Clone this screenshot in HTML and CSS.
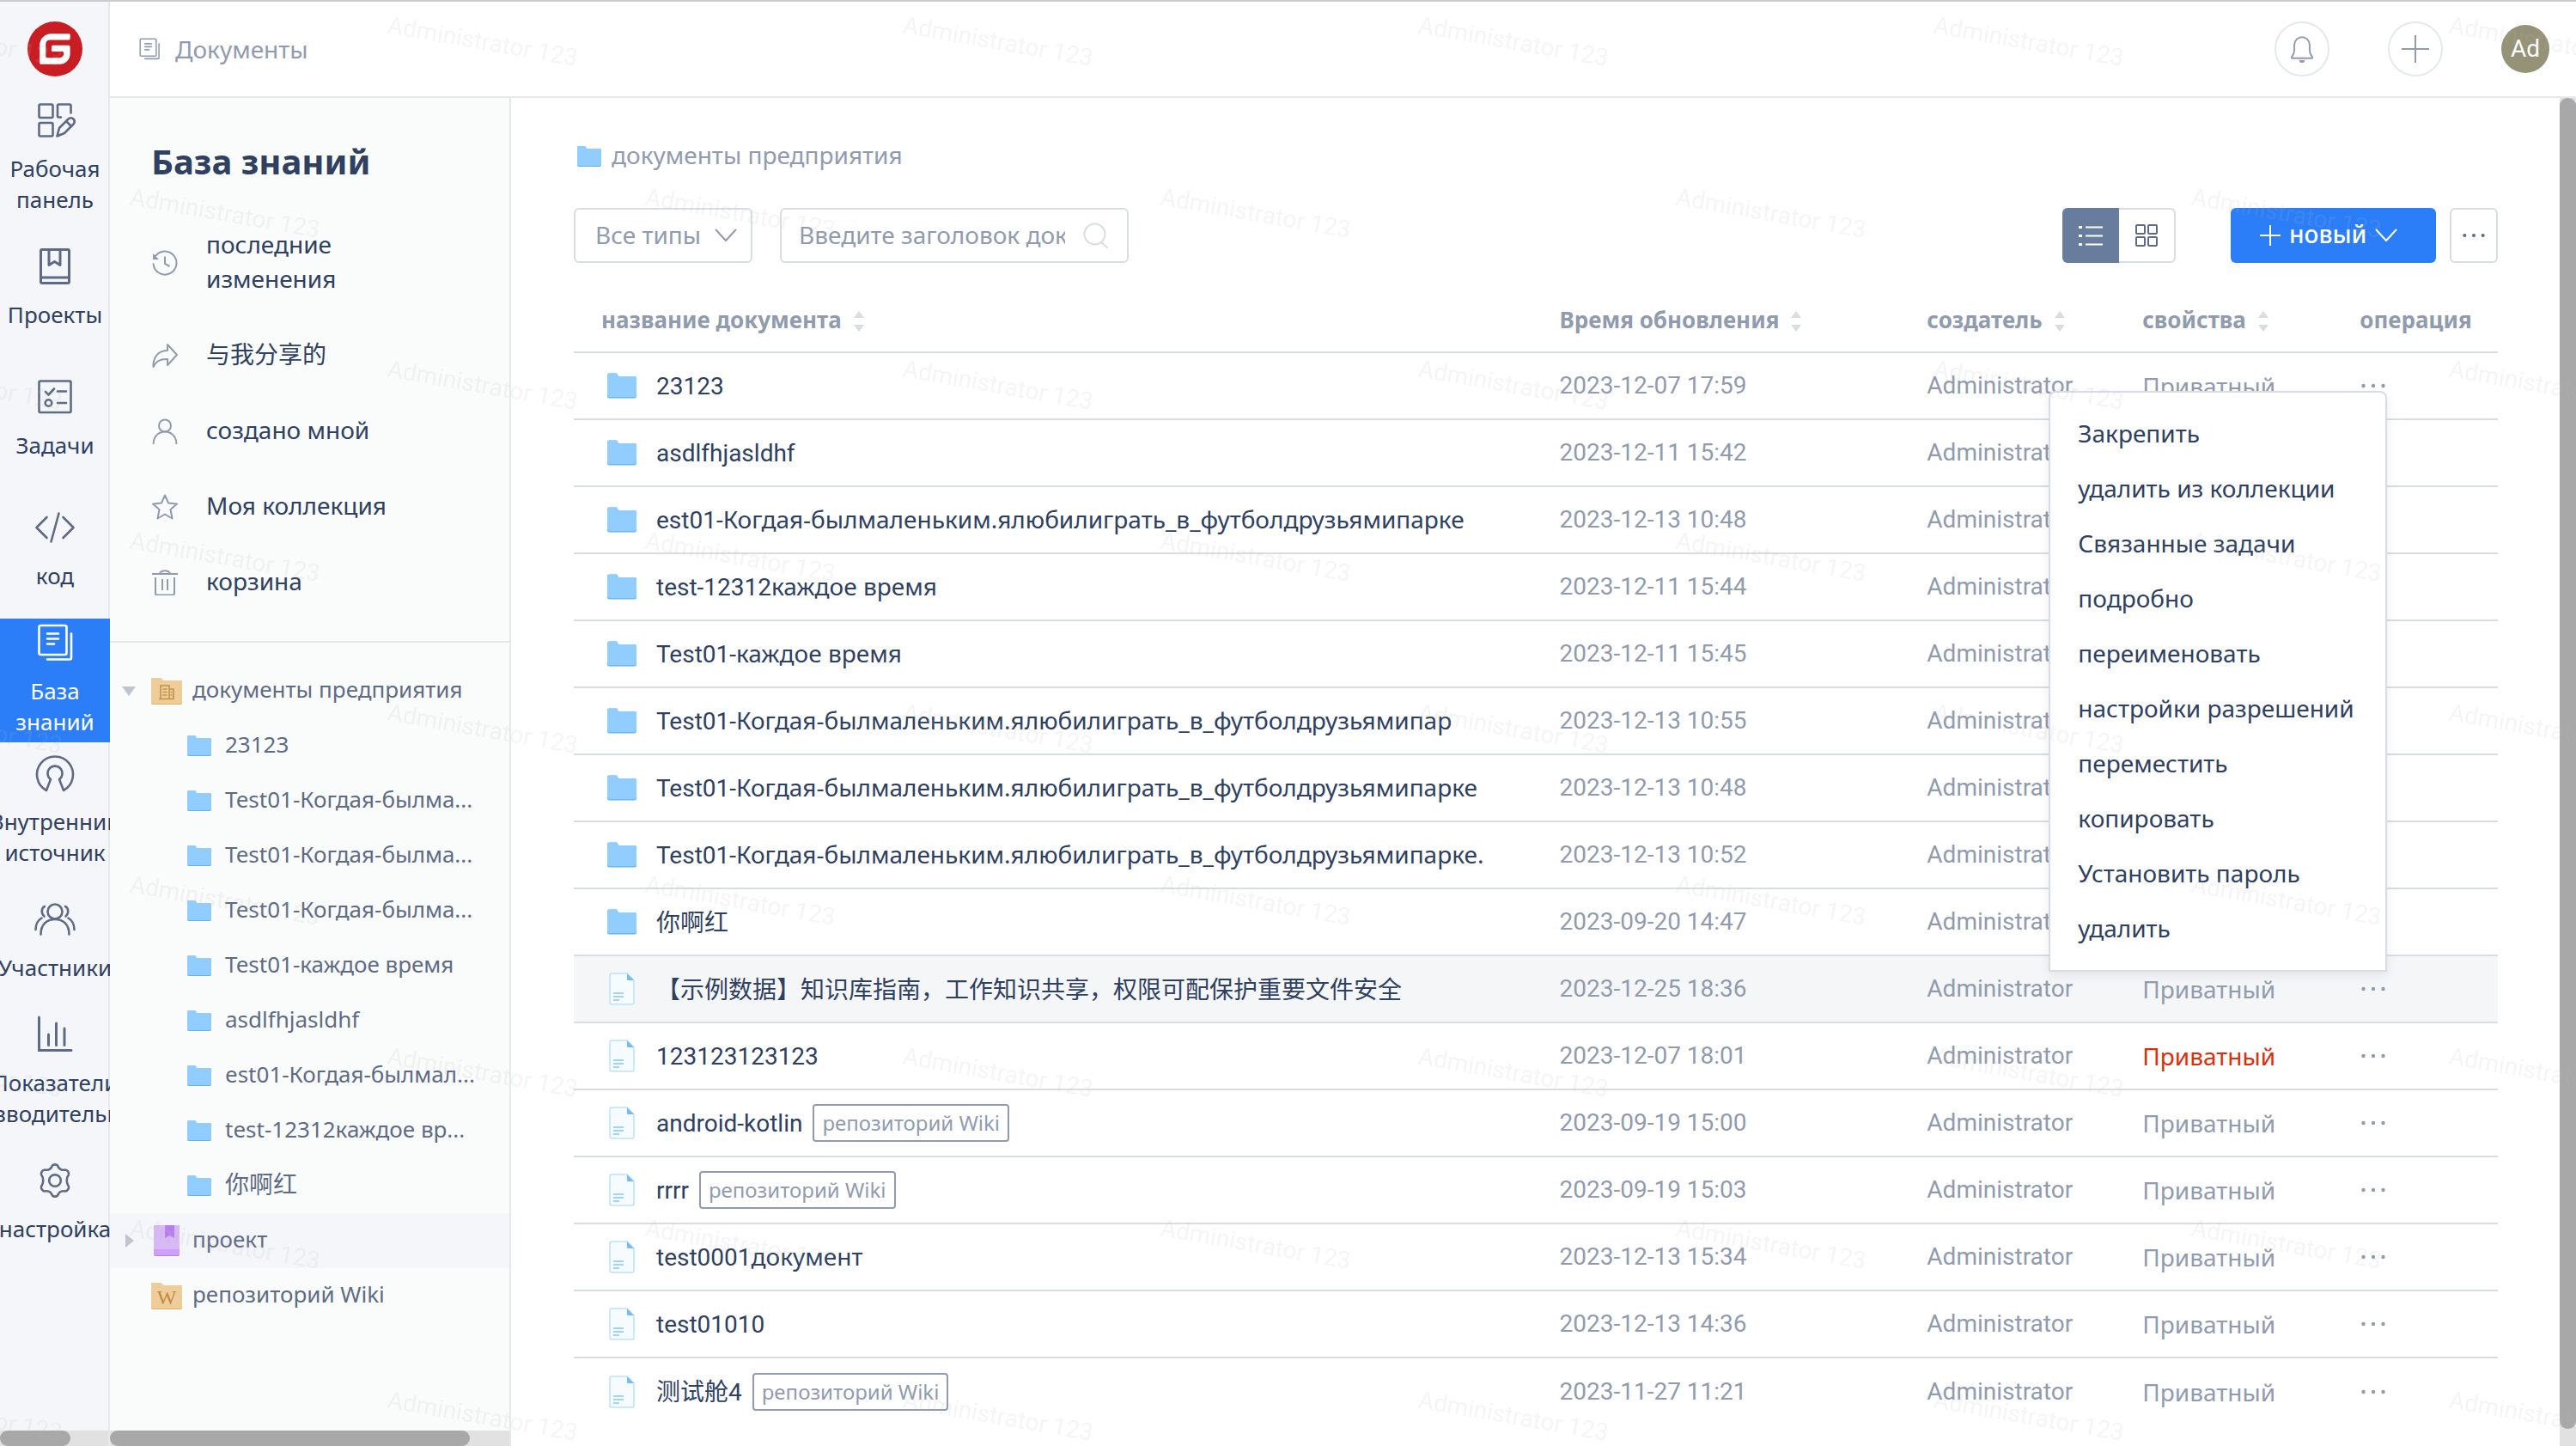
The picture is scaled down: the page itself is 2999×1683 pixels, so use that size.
FILE: index.html
```html
<!DOCTYPE html>
<html lang="ru">
<head>
<meta charset="utf-8">
<meta name="viewport" content="width=device-width, initial-scale=1">
<title>База знаний</title>
<link rel="stylesheet" href="styles.css">
</head>
<body>

<svg class="sprite" aria-hidden="true">
  <symbol id="i-folder" viewBox="0 0 28 24">
    <path d="M0 2a2 2 0 0 1 2-2h7l2 3h15a2 2 0 0 1 2 2v17a2 2 0 0 1-2 2H2a2 2 0 0 1-2-2z" fill="#5fb0f5"/>
    <path d="M0 2a2 2 0 0 1 2-2h7l2 3h15a2 2 0 0 1 2 2v16a2 2 0 0 1-2 2H2a2 2 0 0 1-2-2z" fill="#92cdff"/>
  </symbol>
  <symbol id="i-file" viewBox="0 0 30 38">
    <path d="M1 3a2 2 0 0 1 2-2h18l8 8v26a2 2 0 0 1-2 2H3a2 2 0 0 1-2-2z" fill="#f5fbff" stroke="#bfe2fb" stroke-width="1.5"/>
    <path d="M21 1l8 8h-7a1 1 0 0 1-1-1z" fill="#74bdf3"/>
    <path d="M5 24h12M5 28h12M5 32h7" stroke="#86c7fa" stroke-width="1.6"/>
  </symbol>
  <symbol id="i-docs" viewBox="0 0 48 48">
    <g fill="none" stroke="currentColor" stroke-width="2.6" stroke-linecap="round" stroke-linejoin="round">
      <rect x="5.500" y="4" width="32" height="34" rx="2"/>
      <path d="M15 43.500h26a2 2 0 0 0 2-2V13.500M15 13.500h13M15 19.500h13M15 25.500h8"/>
    </g>
  </symbol>
  <symbol id="i-dots" viewBox="0 0 28 6">
    <circle cx="2.500" cy="3" r="2.200" fill="currentColor"/><circle cx="14" cy="3" r="2.200" fill="currentColor"/><circle cx="25.500" cy="3" r="2.200" fill="currentColor"/>
  </symbol>
  <symbol id="i-sort" viewBox="0 0 12 24">
    <path d="M6 0l6 8H0zM6 24l6-8H0z" fill="#d9dce3"/>
  </symbol>
  <symbol id="i-chevron" viewBox="0 0 26 16">
    <path d="M1 1l12 13L25 1" fill="none" stroke="currentColor" stroke-width="2"/>
  </symbol>
</svg>

<nav class="rail" aria-label="Основное меню">
  <a class="logo" href="#" aria-label="Gitee">
    <svg viewBox="0 0 64 64"><circle cx="32" cy="32" r="32" fill="#c71d23"/><path fill="#fff" d="M48.200 14.200H27.600A13.400 13.400 0 0 0 14.200 27.600v20.600a1.600 1.600 0 0 0 1.600 1.600h21.700a12.100 12.100 0 0 0 12.100-12.100v-8.300a1.600 1.600 0 0 0-1.600-1.600H29.600a1.600 1.600 0 0 0-1.600 1.600v4a1.600 1.600 0 0 0 1.600 1.600h11a1.600 1.600 0 0 1 1.600 1.600v.8a4.800 4.800 0 0 1-4.800 4.800H22.900a1.600 1.600 0 0 1-1.600-1.600V26.200a4.800 4.800 0 0 1 4.800-4.800h22a1.600 1.600 0 0 0 1.600-1.600v-4a1.600 1.600 0 0 0-1.500-1.600z"/></svg>
  </a>
  <a class="rail-item" href="#">
    <svg viewBox="0 0 48 48"><g fill="none" stroke="currentColor" stroke-width="2.600" stroke-linejoin="round" stroke-linecap="round"><rect x="5.500" y="5.500" width="16" height="15.500" rx="1.500"/><rect x="5.500" y="27" width="16" height="15.500" rx="1.500"/><path d="M31 20.500h-2.500a1.500 1.500 0 0 1-1.500-1.500V7a1.500 1.500 0 0 1 1.500-1.500H41a1.500 1.500 0 0 1 1.500 1.500v8.500M26.500 42.500l2.500-9.500 10.500-10.500c2-2 4.500-1.500 6 0s1.500 4 0 6L35 39zM37.500 25.500l5.500 5.500"/></g></svg>
    <span>Рабочая<br>панель</span>
  </a>
  <a class="rail-item" href="#">
    <svg viewBox="0 0 48 48"><g fill="none" stroke="currentColor" stroke-width="3" stroke-linejoin="round"><rect x="7.500" y="4.500" width="33" height="39" rx="1.500"/><path d="M7.500 37h33M17 5v17.500l6.500-4 6.500 4V5"/></g></svg>
    <span>Проекты</span>
  </a>
  <a class="rail-item" href="#">
    <svg viewBox="0 0 48 48"><g fill="none" stroke="currentColor" stroke-width="2.600" stroke-linejoin="round" stroke-linecap="round"><rect x="5.500" y="5.500" width="37" height="36.500" rx="1.500"/><path d="M13 18l3.500 3.500 6.500-7M27 17.500h10M27 31h10"/><circle cx="16.500" cy="31" r="3.800"/></g></svg>
    <span>Задачи</span>
  </a>
  <a class="rail-item" href="#">
    <svg viewBox="0 0 48 48"><path d="M14.500 12L2.500 24l12 12M33.500 12l12 12-12 12M28.500 7.500l-9 33" fill="none" stroke="currentColor" stroke-width="2.600" stroke-linecap="round" stroke-linejoin="round"/></svg>
    <span>код</span>
  </a>
  <a class="rail-item is-active" href="#" aria-current="page">
    <svg><use href="#i-docs"/></svg>
    <span>База<br>знаний</span>
  </a>
  <a class="rail-item" href="#">
    <svg viewBox="0 0 48 48"><path d="M14 44A21 21 0 1 1 34 44l-5-13a8.500 8.500 0 1 0-10 0z" fill="none" stroke="currentColor" stroke-width="2.600" stroke-linejoin="round"/></svg>
    <span>Внутренний<br>источник</span>
  </a>
  <a class="rail-item" href="#">
    <svg viewBox="0 0 48 48"><g fill="none" stroke="currentColor" stroke-width="2.600" stroke-linecap="round"><circle cx="24" cy="15" r="8.500"/><path d="M7.500 41.500C7.500 30 14.500 24 24 24s16.500 6 16.500 17.500M12 9c-4 2-4.500 8-.5 11.500M8.500 22.500C3.500 25.500 1.500 29.500 1.500 36M36 9c4 2 4.500 8 .5 11.500M39.500 22.500c5 3 7 7 7 13.500"/></g></svg>
    <span>Участники</span>
  </a>
  <a class="rail-item" href="#">
    <svg viewBox="0 0 48 48"><path d="M5.500 4v38.500H43M16.500 24v12.500M25.500 11v25.500M35 17v19.500" fill="none" stroke="currentColor" stroke-width="3" stroke-linecap="round"/></svg>
    <span>Показатели<br>производительности</span>
  </a>
  <a class="rail-item" href="#">
    <svg viewBox="0 0 48 48"><g fill="none" stroke="currentColor" stroke-width="2.600" stroke-linejoin="round"><path d="M21 6.500c1.500-1.500 4.500-1.500 6 0 1.500 4 4.500 6 9 5 2.500 0 4.500 3.500 4 5.500-3 4-3 10 0 14 .5 2-1.500 5.500-4 5.500-4.500-1-7.500 1-9 5-1.500 1.500-4.500 1.500-6 0-1.500-4-4.500-6-9-5-2.500 0-4.500-3.500-4-5.500 3-4 3-10 0-14-.5-2 1.500-5.500 4-5.500 4.500 1 7.500-1 9-5z"/><circle cx="24" cy="24" r="6.800"/></g></svg>
    <span>настройка</span>
  </a>
  <div class="hbar hbar-rail" aria-hidden="true"><i></i></div>
</nav>

<div class="page">
  <header class="topbar">
    <div class="crumb"><svg><use href="#i-docs"/></svg><span>Документы</span></div>
    <div class="top-actions">
      <button class="round" type="button" aria-label="Уведомления"><svg viewBox="0 0 32 36"><path d="M2.500 28.500c2.500-3 3.500-5 3.500-9v-7a10 10 0 0 1 20 0v7c0 4 1 6 3.500 9 .5 1 0 1.500-.500 1.500H3c-.7 0-1-.8-.5-1.500z" fill="none" stroke="currentColor" stroke-width="2.200"/><path d="M12.500 32.500h7a3.500 3.500 0 0 1-7 0z" fill="currentColor"/></svg></button>
      <button class="round" type="button" aria-label="Добавить"><svg viewBox="0 0 32 32"><path d="M16 0v32M0 16h32" stroke="currentColor" stroke-width="2"/></svg></button>
      <button class="avatar" type="button">Ad</button>
    </div>
  </header>

  <div class="columns">
    <aside class="side">
      <h1>База знаний</h1>
      <ul class="quick">
        <li><a href="#"><svg viewBox="0 0 30 30"><path d="M1.500 15.500a13.500 13.500 0 1 0 4-10L3 8M15 7.500V16l5.500 3" fill="none" stroke="currentColor" stroke-width="2"/><path d="M1 4v7h7z" fill="currentColor"/></svg><span>последние изменения</span></a></li>
        <li><a href="#"><svg viewBox="0 0 30 30"><path d="M18 2l11 12-11 12v-7C10 18.500 4.500 21 1.500 28 1 17 7 9 18 9z" fill="none" stroke="currentColor" stroke-width="2" stroke-linejoin="round"/></svg><span>与我分享的</span></a></li>
        <li><a href="#"><svg viewBox="0 0 30 30"><g fill="none" stroke="currentColor" stroke-width="2"><circle cx="15" cy="8.500" r="7"/><path d="M1.500 30c0-9 6-14.500 13.500-14.500S28.500 21 28.500 30"/></g></svg><span>создано мной</span></a></li>
        <li><a href="#"><svg viewBox="0 0 30 30"><path d="M15 1.500l4 9 10 1-7.500 6.500 2 10.500L15 23.500 6.500 28.500l2-10.500L1 11.500l10-1z" fill="none" stroke="currentColor" stroke-width="2" stroke-linejoin="round"/></svg><span>Моя коллекция</span></a></li>
        <li><a href="#"><svg viewBox="0 0 30 30"><path d="M0 5h30M9 5c1-5 11-5 12 0M4 9v18.500a2 2 0 0 0 2 2h18a2 2 0 0 0 2-2V9M12 11v13M18 11v13" fill="none" stroke="currentColor" stroke-width="2"/></svg><span>корзина</span></a></li>
      </ul>
      <ul class="tree">
        <li>
          <a class="node" href="#"><svg class="caret" viewBox="0 0 16 12"><path d="M0 1h16L8 12z" fill="#c0c4cf"/></svg><svg class="root-icon" viewBox="0 0 36 32"><path d="M0 3a2 2 0 0 1 2-2h9l3 3h20a2 2 0 0 1 2 2v24a2 2 0 0 1-2 2H2a2 2 0 0 1-2-2z" fill="#e5ae5f"/><path d="M0 3a2 2 0 0 1 2-2h9l3 3h20a2 2 0 0 1 2 2v23a2 2 0 0 1-2 2H2a2 2 0 0 1-2-2z" fill="#efcd9b"/><path d="M9 25.500h18M11 25V10h10v15M21 14h5v11M13.500 14h5M13.500 17.500h5M13.500 21h5M22.500 17.500h2M22.500 21h2" fill="none" stroke="#c4924a" stroke-width="1.600"/></svg><span>документы предприятия</span></a>
          <ul>
            <li><a class="node leaf" href="#"><svg><use href="#i-folder"/></svg><span>23123</span></a></li>
            <li><a class="node leaf" href="#"><svg><use href="#i-folder"/></svg><span>Test01-Когдая-былма...</span></a></li>
            <li><a class="node leaf" href="#"><svg><use href="#i-folder"/></svg><span>Test01-Когдая-былма...</span></a></li>
            <li><a class="node leaf" href="#"><svg><use href="#i-folder"/></svg><span>Test01-Когдая-былма...</span></a></li>
            <li><a class="node leaf" href="#"><svg><use href="#i-folder"/></svg><span>Test01-каждое время</span></a></li>
            <li><a class="node leaf" href="#"><svg><use href="#i-folder"/></svg><span>asdlfhjasldhf</span></a></li>
            <li><a class="node leaf" href="#"><svg><use href="#i-folder"/></svg><span>est01-Когдая-былмал...</span></a></li>
            <li><a class="node leaf" href="#"><svg><use href="#i-folder"/></svg><span>test-12312каждое вр...</span></a></li>
            <li><a class="node leaf cjk" href="#"><svg><use href="#i-folder"/></svg><span>你啊红</span></a></li>
          </ul>
        </li>
        <li><a class="node is-hover" href="#"><svg class="caret" viewBox="0 0 16 16"><path d="M4 0v16l10-8z" fill="#c0c4cf"/></svg><svg class="root-icon" viewBox="0 0 36 36"><rect x="3" width="30" height="36" rx="2" fill="#b77ef0"/><path d="M5 0h26a2 2 0 0 1 2 2v31a2 2 0 0 1-2 2H5a2 2 0 0 1-2-2V2a2 2 0 0 1 2-2z" fill="#cf9ffc"/><path d="M5 0h26a2 2 0 0 1 2 2v26H3V2a2 2 0 0 1 2-2z" fill="#d7b9f5"/><path d="M16 0h11v15l-5.500-3-5.500 3z" fill="#b77ef0"/></svg><span>проект</span></a></li>
        <li><a class="node" href="#"><i class="caret"></i><svg class="root-icon" viewBox="0 0 36 32"><path d="M0 3a2 2 0 0 1 2-2h9l3 3h20a2 2 0 0 1 2 2v24a2 2 0 0 1-2 2H2a2 2 0 0 1-2-2z" fill="#e5ae5f"/><path d="M0 3a2 2 0 0 1 2-2h9l3 3h20a2 2 0 0 1 2 2v23a2 2 0 0 1-2 2H2a2 2 0 0 1-2-2z" fill="#efcd9b"/><text x="18" y="26" text-anchor="middle" class="wiki-letter">W</text></svg><span>репозиторий Wiki</span></a></li>
      </ul>
      <div class="hbar hbar-side" aria-hidden="true"><i></i></div>
    </aside>

    <main class="main">
      <div class="path"><svg><use href="#i-folder"/></svg><a href="#">документы предприятия</a></div>

      <div class="tools">
        <div class="select">
          <select aria-label="Тип документа"><option>Все типы</option></select>
          <svg><use href="#i-chevron"/></svg>
        </div>
        <div class="search">
          <input type="text" aria-label="Заголовок документа" placeholder="Введите заголовок документа">
          <svg viewBox="0 0 30 30"><g fill="none" stroke="currentColor" stroke-width="2"><circle cx="13.500" cy="13.500" r="12"/><path d="M21 23l7.500 6.500"/></g></svg>
        </div>
        <div class="views">
          <button class="is-on" type="button" aria-label="Список"><svg viewBox="0 0 28 24"><path d="M8 2.500h20M8 12.500h20M8 22.500h20" stroke="currentColor" stroke-width="2"/><path d="M0 1h4v3H0zM0 11h4v3H0zM0 21h4v3H0z" fill="currentColor"/></svg></button>
          <button type="button" aria-label="Плитка"><svg viewBox="0 0 28 28"><g fill="none" stroke="currentColor" stroke-width="2"><rect x="2" y="2" width="10" height="10" rx="1"/><rect x="16" y="2" width="10" height="10" rx="1"/><rect x="2" y="16" width="10" height="10" rx="1"/><rect x="16" y="16" width="10" height="10" rx="1"/></g></svg></button>
        </div>
        <button class="primary" type="button"><svg class="plus" viewBox="0 0 24 24"><path d="M12 0v24M0 12h24" stroke="currentColor" stroke-width="2"/></svg><span>новый</span><svg class="chev"><use href="#i-chevron"/></svg></button>
        <button class="more" type="button" aria-label="Ещё"><svg><use href="#i-dots"/></svg></button>
      </div>

      <table class="docs">
        <colgroup><col class="c-name"><col class="c-time"><col class="c-user"><col class="c-prop"><col></colgroup>
        <thead>
          <tr><th scope="col">название документа<svg><use href="#i-sort"/></svg></th><th scope="col">Время обновления<svg><use href="#i-sort"/></svg></th><th scope="col">создатель<svg><use href="#i-sort"/></svg></th><th scope="col">свойства<svg><use href="#i-sort"/></svg></th><th scope="col">операция</th></tr>
        </thead>
        <tbody>
          <tr>
            <td><a class="name" href="#"><svg class="folder"><use href="#i-folder"/></svg><span><b>23123</b></span></a></td><td class="lat">2023-12-07 17:59</td><td class="lat">Administrator</td><td>Приватный</td>
            <td>
              <div class="op">
                <button type="button" aria-label="Действия" aria-expanded="true"><svg><use href="#i-dots"/></svg></button>
                <ul class="menu">
                  <li><button type="button">Закрепить</button></li>
                  <li><button type="button">удалить из коллекции</button></li>
                  <li><button type="button">Связанные задачи</button></li>
                  <li><button type="button">подробно</button></li>
                  <li><button type="button">переименовать</button></li>
                  <li><button type="button">настройки разрешений</button></li>
                  <li><button type="button">переместить</button></li>
                  <li><button type="button">копировать</button></li>
                  <li><button type="button">Установить пароль</button></li>
                  <li><button type="button">удалить</button></li>
                </ul>
              </div>
            </td>
          </tr>
          <tr><td><a class="name" href="#"><svg class="folder"><use href="#i-folder"/></svg><span><b>asdlfhjasldhf</b></span></a></td><td class="lat">2023-12-11 15:42</td><td class="lat">Administrator</td><td>Приватный</td><td><div class="op"><button type="button" aria-label="Действия"><svg><use href="#i-dots"/></svg></button></div></td></tr>
          <tr><td><a class="name" href="#"><svg class="folder"><use href="#i-folder"/></svg><span><b>est01-</b>Когдая-былмаленьким.ялюбилиграть_в_футболдрузьямипарке</span></a></td><td class="lat">2023-12-13 10:48</td><td class="lat">Administrator</td><td>Приватный</td><td><div class="op"><button type="button" aria-label="Действия"><svg><use href="#i-dots"/></svg></button></div></td></tr>
          <tr><td><a class="name" href="#"><svg class="folder"><use href="#i-folder"/></svg><span><b>test-12312</b>каждое время</span></a></td><td class="lat">2023-12-11 15:44</td><td class="lat">Administrator</td><td>Приватный</td><td><div class="op"><button type="button" aria-label="Действия"><svg><use href="#i-dots"/></svg></button></div></td></tr>
          <tr><td><a class="name" href="#"><svg class="folder"><use href="#i-folder"/></svg><span><b>Test01-</b>каждое время</span></a></td><td class="lat">2023-12-11 15:45</td><td class="lat">Administrator</td><td>Приватный</td><td><div class="op"><button type="button" aria-label="Действия"><svg><use href="#i-dots"/></svg></button></div></td></tr>
          <tr><td><a class="name" href="#"><svg class="folder"><use href="#i-folder"/></svg><span><b>Test01-</b>Когдая-былмаленьким.ялюбилиграть_в_футболдрузьямипар</span></a></td><td class="lat">2023-12-13 10:55</td><td class="lat">Administrator</td><td>Приватный</td><td><div class="op"><button type="button" aria-label="Действия"><svg><use href="#i-dots"/></svg></button></div></td></tr>
          <tr><td><a class="name" href="#"><svg class="folder"><use href="#i-folder"/></svg><span><b>Test01-</b>Когдая-былмаленьким.ялюбилиграть_в_футболдрузьямипарке</span></a></td><td class="lat">2023-12-13 10:48</td><td class="lat">Administrator</td><td>Приватный</td><td><div class="op"><button type="button" aria-label="Действия"><svg><use href="#i-dots"/></svg></button></div></td></tr>
          <tr><td><a class="name" href="#"><svg class="folder"><use href="#i-folder"/></svg><span><b>Test01-</b>Когдая-былмаленьким.ялюбилиграть_в_футболдрузьямипарке.</span></a></td><td class="lat">2023-12-13 10:52</td><td class="lat">Administrator</td><td>Приватный</td><td><div class="op"><button type="button" aria-label="Действия"><svg><use href="#i-dots"/></svg></button></div></td></tr>
          <tr><td><a class="name" href="#"><svg class="folder"><use href="#i-folder"/></svg><span>你啊红</span></a></td><td class="lat">2023-09-20 14:47</td><td class="lat">Administrator</td><td>Приватный</td><td><div class="op"><button type="button" aria-label="Действия"><svg><use href="#i-dots"/></svg></button></div></td></tr>
          <tr class="is-hover"><td><a class="name" href="#"><svg class="file"><use href="#i-file"/></svg><span>【示例数据】知识库指南，工作知识共享，权限可配保护重要文件安全</span></a></td><td class="lat">2023-12-25 18:36</td><td class="lat">Administrator</td><td>Приватный</td><td><div class="op"><button type="button" aria-label="Действия"><svg><use href="#i-dots"/></svg></button></div></td></tr>
          <tr><td><a class="name" href="#"><svg class="file"><use href="#i-file"/></svg><span><b>123123123123</b></span></a></td><td class="lat">2023-12-07 18:01</td><td class="lat">Administrator</td><td class="alert">Приватный</td><td><div class="op"><button type="button" aria-label="Действия"><svg><use href="#i-dots"/></svg></button></div></td></tr>
          <tr><td><a class="name" href="#"><svg class="file"><use href="#i-file"/></svg><span><b>android-kotlin</b></span><span class="tag">репозиторий Wiki</span></a></td><td class="lat">2023-09-19 15:00</td><td class="lat">Administrator</td><td>Приватный</td><td><div class="op"><button type="button" aria-label="Действия"><svg><use href="#i-dots"/></svg></button></div></td></tr>
          <tr><td><a class="name" href="#"><svg class="file"><use href="#i-file"/></svg><span><b>rrrr</b></span><span class="tag">репозиторий Wiki</span></a></td><td class="lat">2023-09-19 15:03</td><td class="lat">Administrator</td><td>Приватный</td><td><div class="op"><button type="button" aria-label="Действия"><svg><use href="#i-dots"/></svg></button></div></td></tr>
          <tr><td><a class="name" href="#"><svg class="file"><use href="#i-file"/></svg><span><b>test0001</b>документ</span></a></td><td class="lat">2023-12-13 15:34</td><td class="lat">Administrator</td><td>Приватный</td><td><div class="op"><button type="button" aria-label="Действия"><svg><use href="#i-dots"/></svg></button></div></td></tr>
          <tr><td><a class="name" href="#"><svg class="file"><use href="#i-file"/></svg><span><b>test01010</b></span></a></td><td class="lat">2023-12-13 14:36</td><td class="lat">Administrator</td><td>Приватный</td><td><div class="op"><button type="button" aria-label="Действия"><svg><use href="#i-dots"/></svg></button></div></td></tr>
          <tr><td><a class="name" href="#"><svg class="file"><use href="#i-file"/></svg><span>测试舱<b>4</b></span><span class="tag">репозиторий Wiki</span></a></td><td class="lat">2023-11-27 11:21</td><td class="lat">Administrator</td><td>Приватный</td><td><div class="op"><button type="button" aria-label="Действия"><svg><use href="#i-dots"/></svg></button></div></td></tr>
        </tbody>
      </table>
    </main>
    <div class="vbar" aria-hidden="true"><i></i></div>
  </div>
</div>

<svg class="watermark" aria-hidden="true">
  <defs>
    <pattern id="wm" width="600" height="400" patternUnits="userSpaceOnUse">
      <text transform="translate(450 38) rotate(10)">Administrator 123</text>
      <text transform="translate(-150 38) rotate(10)">Administrator 123</text>
      <text transform="translate(150 238) rotate(10)">Administrator 123</text>
    </pattern>
  </defs>
  <rect width="100%" height="100%" fill="url(#wm)"/>
</svg>
</body>
</html>
```

FILE: styles.css
```css
:root {
  --ink: #2f4060;
  --muted: #919bae;
  --slate: #5f6b84;
  --line: #d9dce3;
  --edge: #e3e9ed;
  --blue: #2b7df8;
  --cyr: "Noto Sans", "Open Sans", "Noto Sans CJK SC", sans-serif;
  --lat: Roboto, "Noto Sans", "Noto Sans CJK SC", sans-serif;
}

* { box-sizing: border-box; }

body {
  margin: 0;
  height: 100vh;
  display: flex;
  overflow: hidden;
  border-top: 2px solid #ccc;
  background: #fff;
  color: var(--ink);
  font: 28px/40px var(--cyr);
}

a { color: inherit; text-decoration: none; }
ul { margin: 0; padding: 0; list-style: none; }
button, input, select { font: inherit; color: inherit; }
button { padding: 0; border: 0; background: none; cursor: pointer; }
svg { display: block; flex: none; }
.sprite { position: absolute; width: 0; height: 0; }

/* Noto Sans sits low in its line box: lift labels that stand beside an icon */
.rail-item span, .quick span, .node span, .path a, .primary span { margin: -2px 0 2px; }

/* left rail */
.rail {
  position: relative;
  flex: none;
  width: 128px;
  overflow: hidden;
  background: #f5f6f9;
  box-shadow: inset -2px 0 var(--edge);
}
.logo { display: flex; justify-content: center; height: 110px; padding-top: 23px; }
.logo svg { width: 64px; height: 64px; }
.rail-item {
  display: flex;
  flex-direction: column;
  align-items: center;
  justify-content: center;
  gap: 16px;
  height: 144px;
  margin-bottom: 8px;
  font-size: 26px;
  line-height: 36px;
  text-align: center;
  white-space: nowrap;
}
.rail-item svg { width: 48px; height: 48px; color: var(--slate); }
.rail-item.is-active { background: var(--blue); color: #fff; }
.rail-item.is-active svg { color: #fff; }

/* scroll bars */
.hbar { position: absolute; left: 0; right: 0; bottom: 0; height: 18px; background: #e1e1e1; }
.hbar i { display: block; height: 100%; border-radius: 9px; background: #a8a8a8; }
.hbar-rail { right: 2px; }
.hbar-rail i { width: 65%; }
.hbar-side i { width: 90%; }
.vbar { flex: none; width: 19px; padding-bottom: 20px; background: #e1e1e1; }
.vbar i { display: block; height: 100%; border-radius: 9px; background: #a8a8a8; }

.page { flex: 1; min-width: 0; display: flex; flex-direction: column; }

.topbar {
  flex: none;
  display: flex;
  align-items: center;
  justify-content: space-between;
  height: 112px;
  padding: 0 31px 0 32px;
  border-bottom: 2px solid var(--edge);
  color: var(--muted);
}
.crumb { display: flex; align-items: center; gap: 16px; }
.crumb svg { width: 28px; height: 28px; }
.top-actions { display: flex; align-items: center; gap: 68px; }
.round {
  display: grid;
  place-items: center;
  width: 64px;
  height: 64px;
  border: 2px solid var(--edge);
  border-radius: 50%;
}
.round svg { width: 32px; height: 32px; }
.avatar {
  width: 56px;
  height: 56px;
  border-radius: 50%;
  background: #959278;
  color: #fff;
  font-family: var(--lat);
}

.columns { flex: 1; min-height: 0; display: flex; }

/* knowledge base sidebar */
.side {
  position: relative;
  flex: none;
  width: 467px;
  overflow: hidden;
  border-right: 2px solid var(--edge);
  background: #fafcfb;
}
.side h1 { margin: 46px 48px 26px; font-size: 40px; line-height: 56px; }
.quick { padding-bottom: 24px; border-bottom: 2px solid var(--edge); }
.quick a { display: flex; align-items: center; gap: 33px; padding: 24px 60px 24px 49px; }
.quick svg { width: 30px; height: 30px; color: var(--muted); }
.tree { padding-top: 24px; color: var(--slate); font-size: 26px; }
.node { display: flex; align-items: center; height: 64px; padding-left: 14px; white-space: nowrap; }
.node.is-hover { background: #f5f6fa; }
.caret { width: 16px; height: 16px; margin-right: 18px; }
.root-icon { width: 36px; height: 36px; margin-right: 12px; }
.leaf { gap: 16px; padding-left: 90px; }
.leaf svg { width: 28px; height: 24px; }
.cjk { font-size: 28px; }
.wiki-letter { font: 24px "Liberation Serif", serif; fill: #bd8a3f; }

/* document list */
.main { flex: 1; min-width: 0; padding: 48px 72px 0 73px; overflow: hidden; }
.path { display: flex; align-items: center; gap: 12px; padding-left: 4px; color: var(--muted); }
.path svg { width: 28px; height: 24px; }
.tools { display: flex; align-items: center; margin-top: 40px; height: 64px; }
.select, .search { position: relative; height: 64px; }
.select { width: 208px; margin-right: 32px; }
.search { width: 406px; margin-right: auto; }
.select select, .search input {
  width: 100%;
  height: 100%;
  padding: 0 23px 2px;
  border: 2px solid var(--line);
  border-radius: 6px;
  outline: 0;
  appearance: none;
  background: #fff;
  color: var(--muted);
}
.search input { padding: 0 72px 2px 20px; }
.search input::placeholder { color: var(--muted); opacity: 1; }
.select svg, .search svg { position: absolute; top: 0; bottom: 0; margin: auto 0; pointer-events: none; }
.select svg { right: 18px; width: 26px; height: 16px; color: var(--muted); }
.search svg { right: 23px; width: 30px; height: 30px; color: var(--line); }
.views { display: flex; margin-right: 64px; }
.views button {
  display: grid;
  place-items: center;
  width: 66px;
  height: 64px;
  border: 2px solid var(--line);
  border-left: 0;
  border-radius: 0 6px 6px 0;
  color: var(--slate);
}
.views .is-on { border: 0; border-radius: 6px 0 0 6px; background: #687c9d; color: #fff; }
.views svg { width: 28px; height: 28px; }
.primary {
  display: flex;
  align-items: center;
  gap: 10px;
  width: 239px;
  height: 64px;
  margin-right: 16px;
  padding-left: 34px;
  border-radius: 6px;
  background: var(--blue);
  color: #fff;
  font-weight: 500;
}
.plus { width: 24px; height: 24px; }
.chev { width: 26px; height: 16px; }
.more {
  display: grid;
  place-items: center;
  width: 56px;
  height: 64px;
  border: 2px solid var(--line);
  border-radius: 6px;
  color: var(--slate);
}
.more svg { width: 26px; height: 6px; }

.docs { width: 100%; margin-top: 28px; border-collapse: collapse; table-layout: fixed; color: var(--muted); }
.c-name { width: 49.8%; }
.c-time { width: 19.1%; }
.c-user { width: 11.2%; }
.c-prop { width: 11.3%; }
.docs th { height: 76px; padding: 0 0 0 32px; border-bottom: 2px solid var(--line); font-size: 26px; text-align: left; white-space: nowrap; }
.docs th svg { display: inline-block; width: 12px; height: 24px; margin-left: 14px; vertical-align: middle; }
.docs td { height: 78px; padding: 0 0 0 32px; border-bottom: 2px solid var(--line); white-space: nowrap; }
.docs tr:last-child td { border-bottom: 0; }
.docs .is-hover { background: #f5f6f8; }
.docs .lat { font-family: var(--lat); }
.docs .alert { color: #d9300b; }
.name { display: flex; align-items: center; padding-left: 7px; color: var(--ink); }
.name b { font-family: var(--lat); font-weight: 400; }
.folder { width: 34px; height: 30px; margin-right: 23px; }
.file { width: 30px; height: 38px; margin: 0 25px 0 2px; }
.tag { margin-left: 12px; padding: 0 9px; border: 2px solid var(--muted); border-radius: 4px; color: var(--muted); font-size: 24px; }
.op { position: relative; width: 32px; }
.op > button { display: grid; place-items: center; width: 32px; height: 12px; color: var(--muted); }
.op > button svg { width: 28px; height: 6px; }
.menu {
  position: absolute;
  z-index: 2;
  top: 100%;
  right: 0;
  min-width: 394px;
  padding: 16px 0;
  border: 2px solid var(--line);
  border-radius: 8px 8px 0 0;
  background: #fff;
  box-shadow: 0 4px 12px rgb(47 64 96 / 10%);
  color: var(--ink);
}
.menu button { width: 100%; height: 64px; padding: 0 32px 2px; text-align: left; }

.watermark { position: fixed; inset: 0; z-index: 5; width: 100%; height: 100%; pointer-events: none; }
.watermark text { font: 28px Roboto, sans-serif; fill: #bbb; fill-opacity: .14; }
```
